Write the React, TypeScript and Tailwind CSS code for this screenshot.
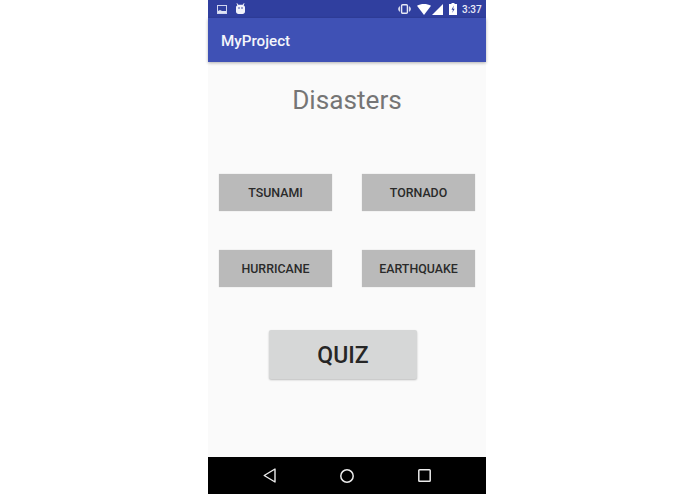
export default function App() {
  const btn = "w-[113px] h-[37px] bg-[#bababa] flex items-center justify-center text-[12.400px] leading-none pt-[1px] font-medium text-[#2a2a2a] shadow-[0_0_1px_rgba(0,0,0,0.2)]";
  return (
    <div className="w-[695px] h-[494px] bg-white flex justify-center overflow-hidden" style={{ fontFamily: "Roboto, sans-serif" }}>
      <div className="w-[278px] h-[494px] ml-[-1px] flex flex-col bg-[#fafafa]">
        <div className="h-[18px] bg-[#303f9f] flex items-center justify-between pl-[9px] pr-[6px] text-white">
          <div className="flex items-center gap-[9px]">
            <svg width="10" height="9" viewBox="0 0 10 9" className="mt-[1px]">
              <rect x="0.500" y="0.500" width="9" height="8" fill="none" stroke="#cfd4ee" strokeWidth="1" />
              <path d="M1 8V6l2-1 2 1 4 0v2z" fill="#dfe3f3" />
            </svg>
            <svg width="9" height="11" viewBox="0 0 9 11" className="mt-[-1px]">
              <path d="M1 0l1.300 1.800h4.400L8 0l.5.4L7.600 2.200C8.500 2.800 9 3.500 9 4.500v4C9 10 8 11 6.500 11h-4C1 11 0 10 0 8.500v-4c0-1 .5-1.700 1.400-2.300L.5.4z" fill="#f2f3fa" />
              <circle cx="3" cy="5" r=".8" fill="#303f9f" />
              <circle cx="6" cy="5" r=".8" fill="#303f9f" />
            </svg>
          </div>
          <div className="flex items-center">
            <svg width="13" height="10" viewBox="0 0 13 10" className="mr-[6px]">
              <rect x="3.600" y="0.700" width="5.800" height="8.600" rx="1" fill="none" stroke="#e6e8f5" strokeWidth="1.400" />
              <path d="M1.600 2.500v5M11.400 2.500v5" stroke="#e6e8f5" strokeWidth="1" />
              <path d="M0.400 3.500v3M12.600 3.500v3" stroke="#e6e8f5" strokeWidth="0.800" />
            </svg>
            <svg width="14" height="11" viewBox="0 0 14 11" className="mr-[1px]">
              <path d="M0 1.700C2 .6 4.500 0 7 0s5 .6 7 1.700L7 11z" fill="#fff" />
            </svg>
            <svg width="11" height="11" viewBox="0 0 11 11" className="mr-[6px]">
              <path d="M11 0v11H0z" fill="#fff" />
            </svg>
            <svg width="8" height="12" viewBox="0 0 8 12" className="mr-[5px]">
              <path d="M2.500 0h3v1H8v11H0V1h2.500z" fill="#fff" />
              <path d="M4.800 2.500L2.500 6.800h1.500L3.300 10l2.300-4.300H4.100z" fill="#303f9f" />
            </svg>
            <span className="text-[10px] leading-none font-medium text-[#e8eaf6] w-[18px] mt-[1px]">3:37</span>
          </div>
        </div>
        <div className="h-[44px] bg-[#3f51b5] flex items-center pl-[13px] pt-[2px] shadow-[0_1px_3px_rgba(0,0,0,0.3)] relative">
          <span className="text-[15.200px] font-medium text-[#f4f5fb]">MyProject</span>
        </div>
        <div className="flex-1 flex flex-col items-center">
          <div className="h-[24px] mt-[27px] flex items-center text-[26.200px] text-[#757575]">Disasters</div>
          <div className="mt-[61px] w-full pl-[11px] pr-[11px] flex justify-between">
            <div className={btn}>TSUNAMI</div>
            <div className={btn}>TORNADO</div>
          </div>
          <div className="mt-[39px] w-full pl-[11px] pr-[11px] flex justify-between">
            <div className={btn}>HURRICANE</div>
            <div className={btn}>EARTHQUAKE</div>
          </div>
          <div className="mt-[43px] ml-[-8px] w-[148px] h-[49px] rounded-[2px] bg-[#d6d7d7] flex items-center justify-center text-[23px] font-medium text-[#262626] pt-[3px] shadow-[0_1px_2px_rgba(0,0,0,0.25)]">QUIZ</div>
        </div>
        <div className="h-[37px] bg-black flex items-center pl-[55px] gap-[64px]">
          <svg width="13" height="15" viewBox="0 0 13 15">
            <path d="M12 1v13L1.200 7.500z" fill="none" stroke="#ececec" strokeWidth="1.400" strokeLinejoin="round" />
          </svg>
          <svg width="14" height="14" viewBox="0 0 14 14">
            <circle cx="7" cy="7" r="6.200" fill="none" stroke="#ececec" strokeWidth="1.500" />
          </svg>
          <svg width="13" height="13" viewBox="0 0 13 13">
            <rect x="0.800" y="0.800" width="11.400" height="11.400" rx="0.800" fill="none" stroke="#ececec" strokeWidth="1.500" />
          </svg>
        </div>
      </div>
    </div>
  );
}
